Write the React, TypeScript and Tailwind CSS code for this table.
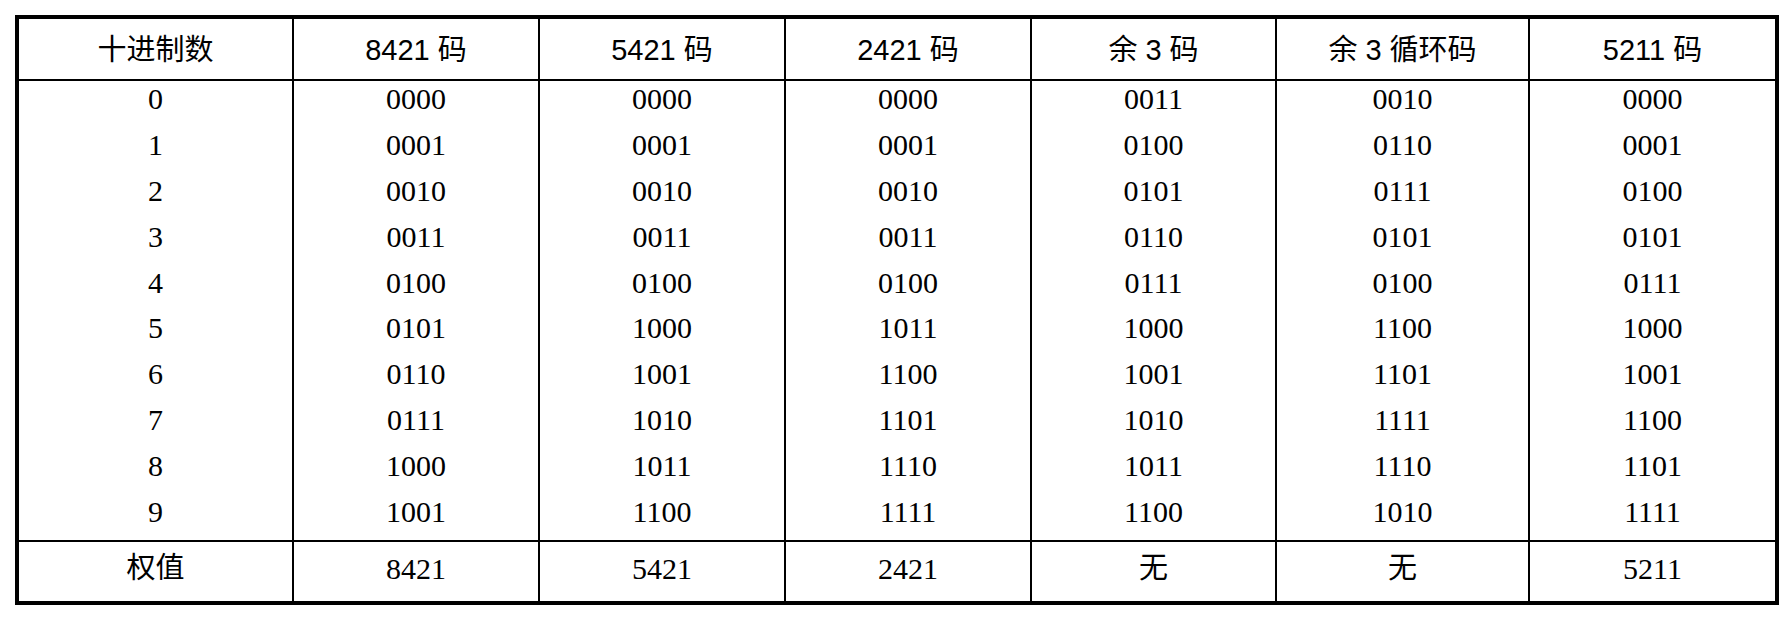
import React from "react";

const headers = ["十进制数", "8421 码", "5421 码", "2421 码", "余 3 码", "余 3 循环码", "5211 码"];
const widths = ["w-[275px]", "w-[246px]", "w-[246px]", "w-[246px]", "w-[245px]", "w-[253px]", "w-[245px]"];

const rows: string[][] = [
  ["0", "0000", "0000", "0000", "0011", "0010", "0000"],
  ["1", "0001", "0001", "0001", "0100", "0110", "0001"],
  ["2", "0010", "0010", "0010", "0101", "0111", "0100"],
  ["3", "0011", "0011", "0011", "0110", "0101", "0101"],
  ["4", "0100", "0100", "0100", "0111", "0100", "0111"],
  ["5", "0101", "1000", "1011", "1000", "1100", "1000"],
  ["6", "0110", "1001", "1100", "1001", "1101", "1001"],
  ["7", "0111", "1010", "1101", "1010", "1111", "1100"],
  ["8", "1000", "1011", "1110", "1011", "1110", "1101"],
  ["9", "1001", "1100", "1111", "1100", "1010", "1111"],
];

const footer: { t: string; cjk: boolean }[] = [
  { t: "权值", cjk: true },
  { t: "8421", cjk: false },
  { t: "5421", cjk: false },
  { t: "2421", cjk: false },
  { t: "无", cjk: true },
  { t: "无", cjk: true },
  { t: "5211", cjk: false },
];

const sans = "font-['Liberation_Sans','Noto_Sans_CJK_SC',sans-serif]";
const serif = "font-['Liberation_Serif','Noto_Serif_CJK_SC',serif]";

export default function App() {
  return (
    <div className="w-[1792px] h-[621px] bg-white pl-[15px] pt-[15px] text-black">
      <div className="w-[1764px] border-4 border-black flex">
        {headers.map((h, c) => (
          <div
            key={c}
            className={`${widths[c]} flex flex-col ${c < 6 ? "border-r-2 border-black" : ""}`}
          >
            <div
              className={`h-[62px] border-b-2 border-black flex items-center justify-center pt-[3px] text-[29px] leading-none ${sans}`}
            >
              {h}
            </div>
            <div className="h-[459px] flex flex-col">
              {rows.map((r, i) => (
                <div
                  key={i}
                  className={`h-[45.9px] flex items-center justify-center pb-[10px] text-[30px] leading-none ${serif}`}
                >
                  {r[c]}
                </div>
              ))}
            </div>
            <div
              className={`h-[61px] border-t-2 border-black flex items-center justify-center pb-[6px] leading-none ${
                footer[c].cjk ? `${sans} text-[29px]` : `${serif} text-[30px]`
              }`}
            >
              {footer[c].t}
            </div>
          </div>
        ))}
      </div>
    </div>
  );
}
